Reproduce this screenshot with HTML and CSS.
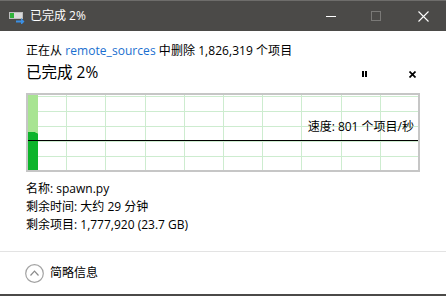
FILE: index.html
```html
<!DOCTYPE html>
<html lang="zh-CN">
<head>
<meta charset="utf-8">
<link rel="stylesheet" href="styles.css">
</head>
<body>
<div class="window">
  <div class="titlebar">
    <svg class="app-icon" width="16" height="12" viewBox="0 0 16 12">
      <rect x="0.5" y="0.5" width="13" height="6" fill="#d9d9d9" stroke="#bdbdbd"/>
      <rect x="1" y="1" width="4" height="5" fill="#2fb33a"/>
      <path d="M7 8.5h5v-2.5l3.5 3.5-3.5 3.5v-2.5h-5z" fill="#3b8fe4"/>
    </svg>
    <span class="title">已完成 2%</span>
    <div class="controls">
      <span class="ctl ctl-min"></span>
      <span class="ctl ctl-max"></span>
      <svg class="ctl ctl-close" width="11" height="11" viewBox="0 0 11 11"><path d="M0.5 0.5L10.5 10.5M10.5 0.5L0.5 10.5" stroke="#fff" stroke-width="1.1"/></svg>
    </div>
  </div>
  <div class="main">
    <div class="line1">正在从 <span class="link">remote_sources</span> 中删除 1,826,319 个项目</div>
    <div class="heading-row">
      <span class="heading">已完成 2%</span>
      <div class="actions">
        <span class="act act-pause"><i></i><i></i></span>
        <span class="act act-close"><svg width="7" height="7" viewBox="0 0 7 7"><path d="M0.5 0.5L6.5 6.5M6.5 0.5L0.5 6.5" stroke="#000" stroke-width="1.7"/></svg></span>
      </div>
    </div>
    <div class="graph">
      <svg class="chart" width="390" height="75" viewBox="0 0 390 75">
        <g stroke="#cdeccf" stroke-width="1">
          <line x1="38.5" y1="0" x2="38.5" y2="75"/>
          <line x1="77.5" y1="0" x2="77.5" y2="75"/>
          <line x1="117.5" y1="0" x2="117.5" y2="75"/>
          <line x1="156.5" y1="0" x2="156.5" y2="75"/>
          <line x1="195.5" y1="0" x2="195.5" y2="75"/>
          <line x1="234.5" y1="0" x2="234.5" y2="75"/>
          <line x1="273.5" y1="0" x2="273.5" y2="75"/>
          <line x1="313.5" y1="0" x2="313.5" y2="75"/>
          <line x1="352.5" y1="0" x2="352.5" y2="75"/>
          <line x1="0" y1="1.5" x2="390" y2="1.5"/>
          <line x1="0" y1="16.5" x2="390" y2="16.5"/>
          <line x1="0" y1="31.5" x2="390" y2="31.5"/>
          <line x1="0" y1="46.5" x2="390" y2="46.5"/>
          <line x1="0" y1="61.5" x2="390" y2="61.5"/>
        </g>
        <rect x="0" y="0" width="10" height="75" fill="#a8e492"/>
        <polygon points="0,37 7,37 8,38 9,38 10,39 10,75 0,75" fill="#0db42b"/>
        <line x1="0" y1="45.5" x2="390" y2="45.5" stroke="#000" stroke-width="1.2"/>
      </svg>
      <span class="speed">速度: 801 个项目/秒</span>
    </div>
    <div class="details">
      <div>名称: spawn.py</div>
      <div>剩余时间: 大约 29 分钟</div>
      <div>剩余项目: 1,777,920 (23.7 GB)</div>
    </div>
  </div>
  <div class="footer">
    <svg class="toggle" width="19" height="19" viewBox="0 0 19 19">
      <circle cx="9.5" cy="9.5" r="8.8" fill="none" stroke="#a3a3a3" stroke-width="1.2"/>
      <path d="M5.5 11.5L9.5 7.2L13.5 11.5" fill="none" stroke="#8a8a8a" stroke-width="1.2"/>
    </svg>
    <span class="footer-label">简略信息</span>
  </div>
</div>
</body>
</html>
```
FILE: styles.css
```css
html, body {
  margin: 0;
  padding: 0;
  background: #ffffff;
}
body {
  font-family: "Open Sans", "Noto Sans CJK SC", sans-serif;
  font-size: 12px;
  color: #000;
}
.window {
  width: 446px;
  height: 296px;
  display: flex;
  flex-direction: column;
  border-bottom: 2px solid #4b4a48;
  box-sizing: border-box;
  overflow: hidden;
}
.titlebar {
  height: 31px;
  flex: none;
  box-sizing: border-box;
  background: #4b4a48;
  border-top: 1px solid #6e6d6b;
  display: flex;
  align-items: center;
  padding-left: 9px;
}
.app-icon {
  display: block;
  margin-top: 3px;
}
.title {
  color: #fff;
  margin-left: 5px;
  font-size: 12px;
  line-height: 16px;
}
.controls {
  margin-left: auto;
  display: flex;
  align-items: center;
}
.ctl {
  display: block;
}
.ctl-min {
  width: 10px;
  height: 1px;
  background: #fff;
  margin-right: 35px;
  margin-top: 1px;
}
.ctl-max {
  width: 8px;
  height: 8px;
  border: 1px solid #7a7977;
  margin-right: 37px;
}
.ctl-close {
  margin-right: 17px;
}
.main {
  height: 220px;
  flex: none;
  box-sizing: border-box;
  padding: 11px 26px 0 26px;
}
.line1 {
  line-height: 18px;
  white-space: nowrap;
  letter-spacing: 0.05px;
}
.link {
  color: #1a6fcf;
}
.heading-row {
  margin-top: 2px;
  display: flex;
  align-items: center;
  height: 20px;
}
.heading {
  font-size: 15.5px;
  line-height: 20px;
}
.actions {
  margin-left: auto;
  display: flex;
  align-items: center;
}
.act {
  width: 16px;
  height: 16px;
  display: flex;
  align-items: center;
  justify-content: center;
  margin-top: 4px;
}
.act-pause {
  gap: 1px;
  margin-right: 32px;
}
.act-pause i {
  display: block;
  width: 2px;
  height: 6px;
  background: #000;
}
.act-close svg {
  display: block;
}
.graph {
  position: relative;
  margin-top: 11px;
  width: 394px;
  height: 79px;
  box-sizing: border-box;
  border: 2px solid #c6c6c6;
  padding: 0;
  background: #fff;
}
.chart {
  display: block;
}
.speed {
  position: absolute;
  right: 4px;
  top: 24px;
  line-height: 16px;
  white-space: nowrap;
}
.details {
  margin-top: 8px;
  line-height: 18px;
}
.footer {
  flex: 1;
  border-top: 1px solid #e3e3e3;
  display: flex;
  align-items: center;
  padding-left: 25px;
}
.toggle {
  display: block;
}
.footer-label {
  margin-left: 6px;
  line-height: 16px;
}
```
